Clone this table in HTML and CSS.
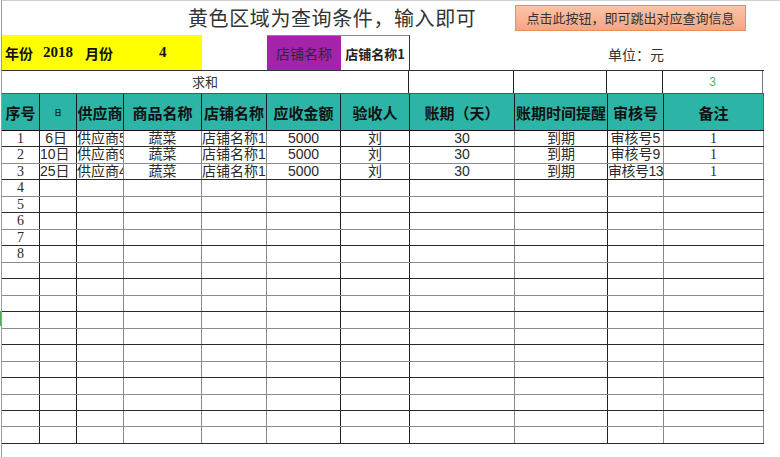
FILE: index.html
```html
<!DOCTYPE html>
<html lang="zh-CN">
<head>
<meta charset="utf-8">
<title>查询表</title>
<link rel="stylesheet" href="styles.css">
</head>
<body>
<div class="page">
  <div class="title-row">
    <div class="title">黄色区域为查询条件，输入即可</div>
    <div class="query-btn">点击此按钮，即可跳出对应查询信息</div>
  </div>

  <div class="sheet">
    <div class="row info-row">
      <div class="yellow"><span class="lbl">年份</span><span class="num y-year">2018</span><span class="lbl y-month">月份</span><span class="num y-m">4</span></div>
      <div class="blank"></div>
      <div class="purple">店铺名称</div>
      <div class="store-input">店铺名称1</div>
      <div class="blank span2"></div>
      <div class="unit">单位：元</div>
      <div class="blank"></div>
    </div>

    <div class="row sum-row">
      <div class="c sum-label">求和</div>
      <div class="c"></div>
      <div class="c"></div>
      <div class="c"></div>
      <div class="c sum-val">3</div>
    </div>

    <div class="row head-row">
      <div class="h">序号</div>
      <div class="h tiny">日</div>
      <div class="h">供应商</div>
      <div class="h">商品名称</div>
      <div class="h">店铺名称</div>
      <div class="h">应收金额</div>
      <div class="h">验收人</div>
      <div class="h">账期（天）</div>
      <div class="h">账期时间提醒</div>
      <div class="h">审核号</div>
      <div class="h">备注</div>
    </div>

    <div class="body">
      <div class="row d"><div class="c seq">1</div><div class="c day">6日</div><div class="c left">供应商5</div><div class="c">蔬菜</div><div class="c left">店铺名称1</div><div class="c">5000</div><div class="c">刘</div><div class="c">30</div><div class="c">到期</div><div class="c">审核号5</div><div class="c seq">1</div></div>
      <div class="row d"><div class="c seq">2</div><div class="c day">10日</div><div class="c left">供应商9</div><div class="c">蔬菜</div><div class="c left">店铺名称1</div><div class="c">5000</div><div class="c">刘</div><div class="c">30</div><div class="c">到期</div><div class="c">审核号9</div><div class="c seq">1</div></div>
      <div class="row d"><div class="c seq">3</div><div class="c day">25日</div><div class="c left">供应商4</div><div class="c">蔬菜</div><div class="c left">店铺名称1</div><div class="c">5000</div><div class="c">刘</div><div class="c">30</div><div class="c">到期</div><div class="c fit">审核号13</div><div class="c seq">1</div></div>
      <div class="row d"><div class="c seq">4</div><div class="c"></div><div class="c"></div><div class="c"></div><div class="c"></div><div class="c"></div><div class="c"></div><div class="c"></div><div class="c"></div><div class="c"></div><div class="c"></div></div>
      <div class="row d"><div class="c seq">5</div><div class="c"></div><div class="c"></div><div class="c"></div><div class="c"></div><div class="c"></div><div class="c"></div><div class="c"></div><div class="c"></div><div class="c"></div><div class="c"></div></div>
      <div class="row d"><div class="c seq">6</div><div class="c"></div><div class="c"></div><div class="c"></div><div class="c"></div><div class="c"></div><div class="c"></div><div class="c"></div><div class="c"></div><div class="c"></div><div class="c"></div></div>
      <div class="row d"><div class="c seq">7</div><div class="c"></div><div class="c"></div><div class="c"></div><div class="c"></div><div class="c"></div><div class="c"></div><div class="c"></div><div class="c"></div><div class="c"></div><div class="c"></div></div>
      <div class="row d"><div class="c seq">8</div><div class="c"></div><div class="c"></div><div class="c"></div><div class="c"></div><div class="c"></div><div class="c"></div><div class="c"></div><div class="c"></div><div class="c"></div><div class="c"></div></div>
      <div class="row d"><div class="c"></div><div class="c"></div><div class="c"></div><div class="c"></div><div class="c"></div><div class="c"></div><div class="c"></div><div class="c"></div><div class="c"></div><div class="c"></div><div class="c"></div></div>
      <div class="row d"><div class="c"></div><div class="c"></div><div class="c"></div><div class="c"></div><div class="c"></div><div class="c"></div><div class="c"></div><div class="c"></div><div class="c"></div><div class="c"></div><div class="c"></div></div>
      <div class="row d"><div class="c"></div><div class="c"></div><div class="c"></div><div class="c"></div><div class="c"></div><div class="c"></div><div class="c"></div><div class="c"></div><div class="c"></div><div class="c"></div><div class="c"></div></div>
      <div class="row d"><div class="c"></div><div class="c"></div><div class="c"></div><div class="c"></div><div class="c"></div><div class="c"></div><div class="c"></div><div class="c"></div><div class="c"></div><div class="c"></div><div class="c"></div></div>
      <div class="row d"><div class="c"></div><div class="c"></div><div class="c"></div><div class="c"></div><div class="c"></div><div class="c"></div><div class="c"></div><div class="c"></div><div class="c"></div><div class="c"></div><div class="c"></div></div>
      <div class="row d"><div class="c"></div><div class="c"></div><div class="c"></div><div class="c"></div><div class="c"></div><div class="c"></div><div class="c"></div><div class="c"></div><div class="c"></div><div class="c"></div><div class="c"></div></div>
      <div class="row d"><div class="c"></div><div class="c"></div><div class="c"></div><div class="c"></div><div class="c"></div><div class="c"></div><div class="c"></div><div class="c"></div><div class="c"></div><div class="c"></div><div class="c"></div></div>
      <div class="row d"><div class="c"></div><div class="c"></div><div class="c"></div><div class="c"></div><div class="c"></div><div class="c"></div><div class="c"></div><div class="c"></div><div class="c"></div><div class="c"></div><div class="c"></div></div>
      <div class="row d"><div class="c"></div><div class="c"></div><div class="c"></div><div class="c"></div><div class="c"></div><div class="c"></div><div class="c"></div><div class="c"></div><div class="c"></div><div class="c"></div><div class="c"></div></div>
      <div class="row d"><div class="c"></div><div class="c"></div><div class="c"></div><div class="c"></div><div class="c"></div><div class="c"></div><div class="c"></div><div class="c"></div><div class="c"></div><div class="c"></div><div class="c"></div></div>
      <div class="row d"><div class="c"></div><div class="c"></div><div class="c"></div><div class="c"></div><div class="c"></div><div class="c"></div><div class="c"></div><div class="c"></div><div class="c"></div><div class="c"></div><div class="c"></div></div>
    </div>
  </div>
  <div class="row-marker"></div>
</div>
</body>
</html>
```

FILE: styles.css
```css
html, body {
  margin: 0;
  padding: 0;
  background: #fff;
}
body {
  font-family: "Liberation Sans", "Noto Sans CJK SC", sans-serif;
  color: #222;
  width: 780px;
  height: 457px;
  overflow: hidden;
}
.page {
  position: relative;
  margin-left: 1px;
  height: 457px;
  box-sizing: border-box;
  border-top: 1px solid #cfcfcf;
  border-left: 1px solid #9a9a9a;
}
.title-row {
  display: flex;
  height: 34px;
}
.title {
  width: 513px;
  box-sizing: border-box;
  padding-left: 186px;
  font-family: "Noto Sans CJK SC", sans-serif;
  font-size: 20px;
  letter-spacing: 0.6px;
  line-height: 34px;
  color: #333;
  white-space: nowrap;
}
.query-btn {
  margin-top: 4px;
  width: 231px;
  height: 26px;
  box-sizing: border-box;
  border: 1px solid #f08b56;
  background: linear-gradient(#fcc4a8, #f5a582);
  font-family: "Noto Sans CJK SC", sans-serif;
  font-size: 13px;
  line-height: 24px;
  text-align: center;
  color: #333;
  white-space: nowrap;
}
.sheet {
  width: 762px;
  overflow: hidden;
}
.row {
  display: grid;
  grid-template-columns: 38px 37px 47px 78px 65px 74px 69px 105px 93px 56px 100px;
  width: 762px;
}
/* info row */
.info-row {
  height: 36px;
  box-sizing: border-box;
  border-bottom: 1px solid #333;
}
.yellow {
  grid-column: span 4;
  background: #ffff00;
  display: flex;
  align-items: center;
  padding-left: 3px;
  font-weight: bold;
  color: #111;
  font-size: 14px;
}
.yellow .lbl {
  font-family: "Noto Sans CJK SC", sans-serif;
}
.yellow .num {
  font-family: "Liberation Serif", serif;
  font-size: 15px;
}
.y-year { margin-left: 10px; }
.y-month { margin-left: 12px; }
.y-m { margin-left: 46px; }
.span2 { grid-column: span 2; }
.purple {
  background: #a423aa;
  border-top: 1px solid #8a8a8a;
  font-family: "Noto Sans CJK SC", sans-serif;
  font-size: 14px;
  color: #2a2a2a;
  display: flex;
  align-items: center;
  justify-content: center;
}
.store-input {
  border-top: 1px solid #8a8a8a;
  border-right: 1px solid #333;
  font-family: "Noto Sans CJK SC", sans-serif;
  font-size: 13px;
  font-weight: bold;
  display: flex;
  align-items: center;
  justify-content: center;
  white-space: nowrap;
}
.unit {
  font-family: "Noto Sans CJK SC", sans-serif;
  font-size: 14px;
  color: #333;
  display: flex;
  align-items: center;
  justify-content: center;
  white-space: nowrap;
  padding-top: 2px;
}
/* sum row */
.sum-row {
  grid-template-columns: 407px 105px 93px 56px 100px;
  height: 23px;
  box-sizing: border-box;
  border-bottom: 1px solid #555;
}
.c {
  box-sizing: border-box;
  border-right: 1px solid #222;
  overflow: hidden;
  white-space: nowrap;
  text-align: center;
  font-size: 14px;
}
.sum-label {
  font-family: "Noto Sans CJK SC", sans-serif;
  font-size: 13px;
  color: #333;
  line-height: 22px;
}
.sum-val {
  color: #3dbb6e;
  font-size: 12px;
  line-height: 22px;
  border-right-color: #777;
}
/* header row */
.head-row {
  height: 37px;
  box-sizing: border-box;
  background: #2cb5a6;
  border-bottom: 1px solid #111;
}
.h {
  box-sizing: border-box;
  border-right: 1px solid #1a1a1a;
  display: flex;
  align-items: center;
  justify-content: center;
  font-family: "Noto Sans CJK SC", sans-serif;
  font-weight: bold;
  font-size: 15px;
  color: #111;
  white-space: nowrap;
  overflow: hidden;
}
.h.tiny { font-size: 7px; }
.h:last-child { border-right-color: #666; }
/* data rows */
.d {
  height: 16.47px;
  box-sizing: border-box;
  border-bottom: 1px solid #2a2a2a;
}
.d:nth-child(even) { border-bottom-color: #8c8c8c; }
.d .c {
  line-height: 15px;
  color: #2a2a2a;
}
.d .c:nth-child(3),
.d .c:nth-child(4),
.d .c:nth-child(5),
.d .c:nth-child(8),
.d .c:nth-child(10),
.d .c:nth-child(11) {
  border-right-color: #8a8a8a;
}
.d .seq {
  font-family: "Liberation Serif", serif;
}
.d .day {
  text-align: right;
  padding-right: 9px;
}
.d .left { text-align: left; }
.d .fit { text-align: left; letter-spacing: -0.5px; }
.row-marker {
  position: absolute;
  left: -2px;
  top: 310px;
  width: 1px;
  height: 15px;
  background: #4caf50;
}
```
